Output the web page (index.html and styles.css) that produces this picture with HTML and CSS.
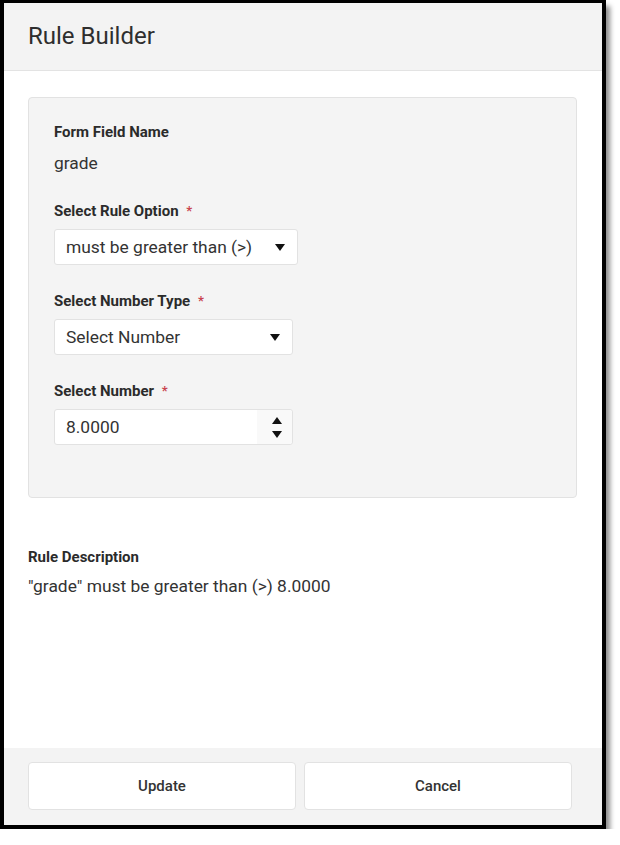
FILE: index.html
```html
<!DOCTYPE html>
<html lang="en">
<head>
    <meta charset="UTF-8">
    <meta name="viewport" content="width=device-width, initial-scale=1.0">
    <title>Rule Builder</title>
    <link rel="stylesheet" href="styles.css">
</head>
<body>
    <div class="rule-modal">
        <div class="rule-modal-header">
            <h1>Rule Builder</h1>
        </div>

        <div class="rule-modal-body">
            <div class="rule-card">
                <div class="field-group">
                    <div class="field-label">Form Field Name</div>
                    <div class="field-value">grade</div>
                </div>

                <div class="field-group">
                    <div class="field-label">Select Rule Option <span class="required">*</span></div>
                    <div class="field-control wide">
                        <span>must be greater than (&gt;)</span>
                        <svg class="caret" width="10" height="7" viewBox="0 0 10 7"><path d="M0 0 H10 L5 7 Z"/></svg>
                    </div>
                </div>

                <div class="field-group">
                    <div class="field-label">Select Number Type <span class="required">*</span></div>
                    <div class="field-control">
                        <span>Select Number</span>
                        <svg class="caret" width="10" height="7" viewBox="0 0 10 7"><path d="M0 0 H10 L5 7 Z"/></svg>
                    </div>
                </div>

                <div class="field-group">
                    <div class="field-label">Select Number <span class="required">*</span></div>
                    <div class="field-control number">
                        <span>8.0000</span>
                        <div class="spinner">
                            <svg width="10" height="7" viewBox="0 0 10 7"><path d="M0 7 H10 L5 0 Z"/></svg>
                            <svg width="10" height="7" viewBox="0 0 10 7"><path d="M0 0 H10 L5 7 Z"/></svg>
                        </div>
                    </div>
                </div>
            </div>

            <div class="rule-description">
                <div class="field-label">Rule Description</div>
                <div class="field-value">"grade" must be greater than (&gt;) 8.0000</div>
            </div>
        </div>

        <div class="rule-modal-footer">
            <button class="footer-btn">Update</button>
            <button class="footer-btn">Cancel</button>
        </div>
    </div>
</body>
</html>
```

FILE: styles.css
```css
* {
    margin: 0;
    padding: 0;
    box-sizing: border-box;
}

body {
    background-color: #fff;
    color: #333;
    font-family: Roboto, "Liberation Sans", Arial, sans-serif;
}

.rule-modal {
    width: 606px;
    height: 829px;
    border-style: solid;
    border-color: #000;
    border-width: 3px 4px 4px 4px;
    background-color: #fff;
    display: flex;
    flex-direction: column;
    box-shadow: 4px 6px 5px rgba(0, 0, 0, 0.45);
}

.rule-modal-header {
    height: 68px;
    background-color: #f3f3f3;
    border-bottom: 1px solid #e3e3e3;
    padding-left: 24px;
}

.rule-modal-header h1 {
    font-size: 24px;
    font-weight: 400;
    line-height: 67px;
    color: #2e2e2e;
}

.rule-modal-body {
    flex: 1;
    padding: 26px 25px 0 24px;
}

.rule-card {
    background-color: #f4f4f4;
    border: 1px solid #e2e2e2;
    border-radius: 4px;
    height: 401px;
    padding: 24px 25px;
}

.field-group {
    margin-bottom: 26px;
}

.field-group:first-child {
    margin-bottom: 27px;
}

.field-label {
    font-size: 15px;
    font-weight: 700;
    line-height: 20px;
    color: #2b2b2b;
    margin-bottom: 8px;
}

.field-group:first-child .field-label {
    margin-bottom: 10px;
}

.required {
    color: #c9444f;
    margin-left: 4px;
    font-size: 13px;
    vertical-align: 1px;
}

.field-value {
    font-size: 17.4px;
    line-height: 22px;
    color: #333;
}

.field-control {
    width: 239px;
    height: 36px;
    background-color: #fff;
    border: 1px solid #e2e2e2;
    border-radius: 3px;
    display: flex;
    align-items: center;
    justify-content: space-between;
    padding: 0 12px 0 11px;
    font-size: 17.4px;
    color: #333;
}

.field-control.wide {
    width: 244px;
}

.field-control .caret {
    fill: #111;
}

.field-control.number {
    padding-right: 0;
}

.spinner {
    width: 35px;
    height: 100%;
    background-color: #f9f9f9;
    display: flex;
    flex-direction: column;
    align-items: center;
    justify-content: center;
    gap: 7px;
    padding-left: 4px;
    border-radius: 0 3px 3px 0;
}

.spinner svg {
    fill: #111;
}

.rule-description {
    margin-top: 49px;
}

.rule-description .field-label {
    margin-bottom: 8px;
}

.rule-modal-footer {
    height: 77px;
    background-color: #f3f3f3;
    display: flex;
    gap: 8px;
    padding: 14px 30px 15px 24px;
}

.footer-btn {
    flex: 1;
    height: 48px;
    background-color: #fff;
    border: 1px solid #e2e2e2;
    border-radius: 4px;
    font-family: Roboto, "Liberation Sans", Arial, sans-serif;
    font-size: 15px;
    font-weight: 500;
    color: #333;
    cursor: pointer;
}
```
